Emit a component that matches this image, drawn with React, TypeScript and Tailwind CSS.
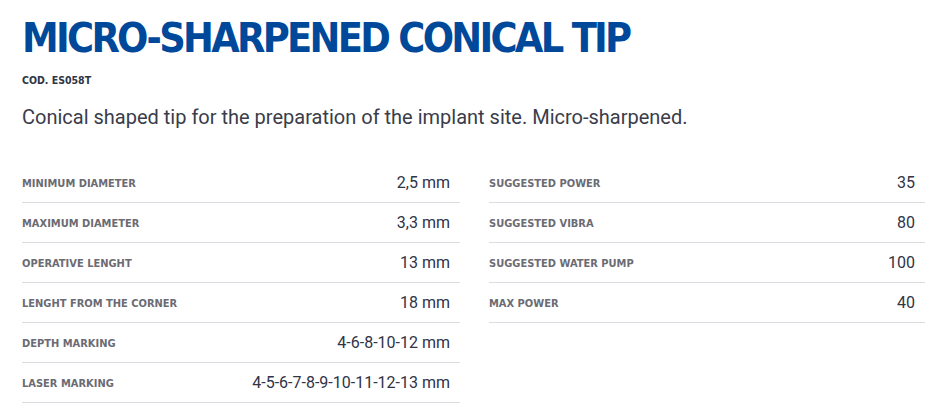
const left = [
  ['MINIMUM DIAMETER', '2,5 mm'],
  ['MAXIMUM DIAMETER', '3,3 mm'],
  ['OPERATIVE LENGHT', '13 mm'],
  ['LENGHT FROM THE CORNER', '18 mm'],
  ['DEPTH MARKING', '4-6-8-10-12 mm'],
  ['LASER MARKING', '4-5-6-7-8-9-10-11-12-13 mm'],
]

const right = [
  ['SUGGESTED POWER', '35'],
  ['SUGGESTED VIBRA', '80'],
  ['SUGGESTED WATER PUMP', '100'],
  ['MAX POWER', '40'],
]

function SpecTable({ rows }: { rows: string[][] }) {
  return (
    <div className="flex flex-col">
      {rows.map(([label, value]) => (
        <div key={label} className="flex h-10 items-center justify-between border-b border-[#dcdde3] pr-[10px]">
          <span className="mt-[4px] font-['DejaVu_Sans_Condensed','DejaVu_Sans',sans-serif] text-[11px] font-bold text-[#6b6b73]">{label}</span>
          <span className="font-['Roboto',sans-serif] text-[16px] text-[#2f3447]">{value}</span>
        </div>
      ))}
    </div>
  )
}

export default function App() {
  return (
    <div className="min-h-[420px] w-[943px] bg-white px-[22px] pt-[14px]">
      <h1 className="font-['DejaVu_Sans_Condensed','DejaVu_Sans',sans-serif] text-[41px] font-bold leading-[48px] tracking-[-2.7px] text-[#00489a]">
        MICRO-SHARPENED CONICAL TIP
      </h1>
      <div className="mt-[11px] font-['DejaVu_Sans_Condensed','DejaVu_Sans',sans-serif] text-[10.5px] font-bold leading-[14px] text-[#2d3547]">
        COD. ES058T
      </div>
      <p className="mt-[17px] font-['Roboto',sans-serif] text-[20px] leading-[26px] text-[#3a3c4a]">
        Conical shaped tip for the preparation of the implant site. Micro-sharpened.
      </p>
      <div className="mt-[33px] grid grid-cols-[438px_436px] gap-[29px]">
        <SpecTable rows={left} />
        <SpecTable rows={right} />
      </div>
    </div>
  )
}
